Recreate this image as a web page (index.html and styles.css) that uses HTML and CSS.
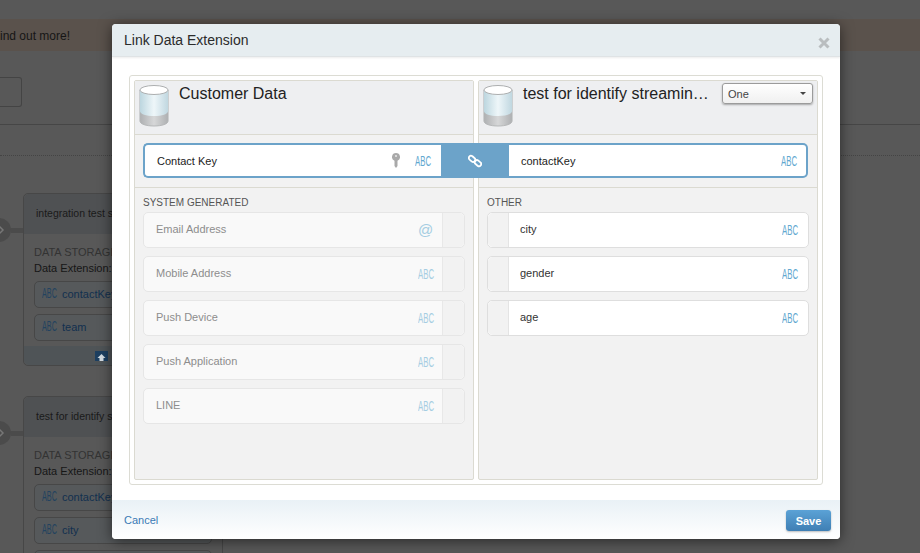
FILE: index.html
```html
<!DOCTYPE html>
<html lang="en">
<head>
<meta charset="utf-8">
<title>Link Data Extension</title>
<link rel="stylesheet" href="styles.css">
</head>
<body>
<div class="backdrop">
  <div class="banner"><span>ind out more!</span></div>
  <div class="toolbar"><div class="search"></div></div>
  <div class="dotted"></div>
  <div class="flows">
    <div class="flow">
      <div class="node"><svg width="12" height="12" viewBox="0 0 12 12"><path d="M6 2l4 4-4 4-4-4z" fill="none" stroke="#777" stroke-width="1.5"/></svg></div>
      <div class="wire"></div>
      <div class="card">
        <div class="card-head">integration test stream</div>
        <div class="card-body">
          <div class="storage">DATA STORAGE</div>
          <div class="ext">Data Extension: test</div>
          <div class="field"><span class="abc dark">ABC</span><span>contactKey</span></div>
          <div class="field"><span class="abc dark">ABC</span><span>team</span></div>
        </div>
        <div class="card-foot"><svg width="13" height="10" viewBox="0 0 13 10"><rect width="13" height="10" fill="#1d3f60"/><path d="M6.500 3l4 4H8.500v3h-4V7H2.500z" fill="#d5dde3"/></svg></div>
      </div>
    </div>
    <div class="flow second">
      <div class="node"><svg width="12" height="12" viewBox="0 0 12 12"><path d="M6 2l4 4-4 4-4-4z" fill="none" stroke="#777" stroke-width="1.5"/></svg></div>
      <div class="wire"></div>
      <div class="card">
        <div class="card-head">test for identify streaming</div>
        <div class="card-body">
          <div class="storage">DATA STORAGE</div>
          <div class="ext">Data Extension: test</div>
          <div class="field"><span class="abc dark">ABC</span><span>contactKey</span></div>
          <div class="field"><span class="abc dark">ABC</span><span>city</span></div>
          <div class="field"></div>
        </div>
      </div>
    </div>
  </div>
</div>

<div class="modal">
  <header class="modal-head">
    <h1>Link Data Extension</h1>
    <svg class="close" width="12" height="12" viewBox="0 0 12 12"><path d="M1.500 1.500l9 9M10.500 1.500l-9 9" stroke="#b9bdbf" stroke-width="3" fill="none"/></svg>
  </header>
  <div class="modal-body">
    <div class="frame">
      <section class="col">
        <div class="col-head">
          <svg class="cyl" width="30" height="42" viewBox="0 0 32 42" preserveAspectRatio="none"><defs><linearGradient id="g1" x1="0" x2="1" y1="0" y2="0"><stop offset="0" stop-color="#bcd6df"/><stop offset=".5" stop-color="#eef6f9"/><stop offset="1" stop-color="#c0d7e0"/></linearGradient><linearGradient id="g2" x1="0" x2="1" y1="0" y2="0"><stop offset="0" stop-color="#aeb0b2"/><stop offset=".5" stop-color="#d6d7d8"/><stop offset="1" stop-color="#aeb0b2"/></linearGradient></defs><path d="M1 5v31c0 3 6.500 5 15 5s15-2 15-5V5z" fill="url(#g2)" stroke="#b5b7b8"/><path d="M1 5v21c0 3 6.500 5 15 5s15-2 15-5V5z" fill="url(#g1)"/><ellipse cx="16" cy="5" rx="15" ry="4.500" fill="#fff" stroke="#a9abac"/></svg>
          <h2>Customer Data</h2>
        </div>
        <div class="link-slot">
          <div class="link-half left">
            <span class="name">Contact Key</span>
            <svg class="key" width="8" height="15" viewBox="0 0 8 15"><path d="M4 0a4 4 0 0 1 1.500 7.700V13L4 15l-1.500-2V7.700A4 4 0 0 1 4 0z" fill="#a9a9a9"/><circle cx="4" cy="3" r="1.100" fill="#e4e4e4"/></svg>
            <span class="abc">ABC</span>
          </div>
        </div>
        <div class="list">
          <div class="label">SYSTEM GENERATED</div>
          <div class="row off"><span class="name">Email Address</span><span class="at">@</span><span class="handle"></span></div>
          <div class="row off"><span class="name">Mobile Address</span><span class="abc">ABC</span><span class="handle"></span></div>
          <div class="row off"><span class="name">Push Device</span><span class="abc">ABC</span><span class="handle"></span></div>
          <div class="row off"><span class="name">Push Application</span><span class="abc">ABC</span><span class="handle"></span></div>
          <div class="row off"><span class="name">LINE</span><span class="abc">ABC</span><span class="handle"></span></div>
        </div>
      </section>
      <section class="col">
        <div class="col-head">
          <svg class="cyl" width="30" height="42" viewBox="0 0 32 42" preserveAspectRatio="none"><path d="M1 5v31c0 3 6.500 5 15 5s15-2 15-5V5z" fill="url(#g2)" stroke="#b5b7b8"/><path d="M1 5v21c0 3 6.500 5 15 5s15-2 15-5V5z" fill="url(#g1)"/><ellipse cx="16" cy="5" rx="15" ry="4.500" fill="#fff" stroke="#a9abac"/></svg>
          <h2 class="trunc">test for identify streamin…</h2>
          <div class="select"><span>One</span><i></i></div>
        </div>
        <div class="link-slot">
          <div class="link-half right">
            <span class="name">contactKey</span>
            <span class="abc">ABC</span>
          </div>
        </div>
        <div class="list">
          <div class="label">OTHER</div>
          <div class="row on"><span class="handle"></span><span class="name">city</span><span class="abc">ABC</span></div>
          <div class="row on"><span class="handle"></span><span class="name">gender</span><span class="abc">ABC</span></div>
          <div class="row on"><span class="handle"></span><span class="name">age</span><span class="abc">ABC</span></div>
        </div>
      </section>
      <div class="chain">
        <svg width="14" height="14" viewBox="0 0 14 14" fill="none" stroke="#fff" stroke-width="1.800"><rect x="0.500" y="2.600" width="7" height="4.400" rx="2.200" transform="rotate(40 4 4.800)"/><rect x="6.500" y="7" width="7" height="4.400" rx="2.200" transform="rotate(40 10 9.200)"/></svg>
      </div>
    </div>
  </div>
  <footer class="modal-foot">
    <a class="cancel">Cancel</a>
    <button class="save">Save</button>
  </footer>
</div>
</body>
</html>
```
FILE: styles.css
```css
* { box-sizing: border-box; }
html, body { margin: 0; height: 100%; }
body {
  width: 920px;
  height: 553px;
  overflow: hidden;
  position: relative;
  background: #585858;
  font-family: "Liberation Sans", Arial, sans-serif;
}

/* dimmed page behind the dialog */
.backdrop { height: 553px; overflow: hidden; padding-top: 19px; }
.banner {
  height: 32px;
  background: #5a524c;
  color: #161616;
  font-size: 12px;
  line-height: 35px;
}
.toolbar { height: 74px; padding-top: 26px; border-bottom: 1px solid #464646; }
.search {
  width: 22px;
  height: 30px;
  border: 1px solid #444;
  border-left: 0;
  border-radius: 0 3px 3px 0;
}
.dotted { height: 31px; border-bottom: 1px dotted #444; }
.flows { padding-top: 37px; }
.flow { display: flex; align-items: flex-start; margin-left: -13px; }
.flow.second { margin-top: 30px; }
.node {
  flex: none;
  width: 24px;
  height: 24px;
  margin-top: 25px;
  border-radius: 50%;
  background: #4b4b4b;
  display: flex;
  align-items: center;
  justify-content: center;
}
.wire { flex: none; width: 12px; height: 5px; margin-top: 35px; background: #4b4b4b; }
.card {
  flex: none;
  width: 200px;
  border: 1px solid #474747;
  border-radius: 5px;
  background: #585858;
}
.card-head {
  height: 40px;
  padding-left: 12px;
  line-height: 38px;
  font-size: 10.500px;
  color: #1a1a1a;
  background: #4f5153;
  border-radius: 5px 5px 0 0;
  white-space: nowrap;
}
.card-body { padding: 11px 10px 0; }
.storage { font-size: 11px; line-height: 14px; color: #333; }
.ext { padding-top: 1px; font-size: 11px; line-height: 16px; color: #161616; margin-bottom: 5px; white-space: nowrap; }
.field {
  height: 27px;
  margin-bottom: 6px;
  padding: 0 7px 2px;
  border: 1px solid #474747;
  border-radius: 5px;
  display: flex;
  align-items: center;
  gap: 4px;
  background: #56595b;
  color: #12304f;
  font-size: 11px;
}
.card-foot {
  height: 19px;
  background: #4f5457;
  border-radius: 0 0 5px 5px;
  margin-top: -1px;
  padding: 5px 0 0 71px;
  display: flex;
}
.second .card { height: 200px; }

/* dialog */
.modal {
  position: absolute;
  left: 112px;
  top: 24px;
  width: 728px;
  height: 515px;
  background: #fff;
  border-radius: 4px;
  box-shadow: 0 2px 14px rgba(0,0,0,.55);
  display: flex;
  flex-direction: column;
  overflow: hidden;
}
.modal-head {
  flex: none;
  height: 33px;
  background: #e6edf0;
  border-bottom: 1px solid #dfe3e5;
  box-shadow: 0 1px 2px rgba(0,0,0,.08);
  display: flex;
  align-items: center;
  justify-content: space-between;
  padding: 0 10px 0 12px;
}
.modal-head h1 { margin: 0; font-size: 14px; font-weight: 400; color: #2b2b2b; }
.close { margin-top: 5px; }
.modal-body { flex: 1; padding: 18px 17px 15px; }
.frame {
  position: relative;
  height: 410px;
  padding: 4px;
  border: 1px solid #dcdcd4;
  border-radius: 3px;
  display: flex;
  gap: 4px;
}
.col {
  width: 340px;
  border: 1px solid #dbdad1;
  border-radius: 2px;
  background: #f2f2f2;
  display: flex;
  flex-direction: column;
}
.col-head {
  flex: none;
  height: 54px;
  padding: 4px 4px 0 4px;
  background: #eeeff1;
  border-bottom: 1px solid #dbdad1;
  display: flex;
  align-items: flex-start;
}
.cyl { flex: none; margin-right: 10px; }
.col-head h2 {
  margin: 0;
  font-size: 16px;
  line-height: 18px;
  font-weight: 400;
  color: #222;
  white-space: nowrap;
}
.col-head .trunc { width: 199px; }
.select {
  width: 91px;
  height: 21px;
  margin-top: -2px;
  padding: 0 6px 0 5px;
  border: 1px solid #9b9b9b;
  border-radius: 3px;
  background: linear-gradient(#fff, #f0f0f0);
  box-shadow: 0 1px 2px rgba(0,0,0,.3);
  font-size: 11px;
  color: #444;
  display: flex;
  align-items: center;
  justify-content: space-between;
}
.select i {
  width: 0;
  height: 0;
  border: 3px solid transparent;
  border-top: 3px solid #444;
  border-bottom: 0;
}
.link-slot {
  flex: none;
  height: 53px;
  padding-top: 8px;
  border-bottom: 1px solid #dbdad1;
}
.link-half {
  height: 35px;
  background: #fff;
  border: 2px solid #6ca3c9;
  display: flex;
  align-items: center;
  font-size: 11px;
  color: #222;
}
.link-half.left {
  width: 298px;
  margin-left: 8px;
  border-right: 0;
  border-radius: 5px 0 0 5px;
  padding: 0 10px 0 12px;
}
.link-half.right {
  width: 299px;
  margin-left: 30px;
  border-left: 0;
  border-radius: 0 5px 5px 0;
  padding: 0 9px 0 12px;
}
.link-half .name { flex: 1; }
.key { margin-right: 15px; }
.chain {
  position: absolute;
  left: 311px;
  top: 67px;
  width: 68px;
  height: 35px;
  background: #6ca3c9;
  display: flex;
  align-items: center;
  justify-content: center;
}
.abc {
  flex: none;
  width: 16px;
  font-size: 15px;
  line-height: 15px;
  color: #5fa8d0;
  transform: scaleX(.52);
  transform-origin: 0 50%;
  white-space: nowrap;
}
.abc.dark { color: #23435f; font-size: 14px; }
.list { flex: 1; padding: 8px 8px 0; }
.label { height: 16px; font-size: 10px; line-height: 14px; color: #555; }
.list .row {
  height: 36px;
  margin-bottom: 8px;
  padding-bottom: 2px;
  border: 1px solid #e6e6e6;
  border-radius: 5px;
  display: flex;
  align-items: center;
  font-size: 11px;
}
.row .name { flex: 1; }
.row.off { background: #f9f9f9; color: #8d8d8d; padding-left: 12px; }
.row.off .abc { color: #a5cde2; margin-right: 8px; }
.row.off .handle {
  width: 22px;
  align-self: stretch;
  margin-bottom: -2px;
  background: #f2f2f2;
  border-left: 1px solid #e8e8e8;
  border-radius: 0 5px 5px 0;
}
.row.on { background: #fff; color: #333; padding-right: 10px; border-color: #dedede; }
.row.on .handle {
  width: 21px;
  align-self: stretch;
  margin: 0 11px -2px 0;
  background: #f2f2f2;
  border-right: 1px solid #e4e4e4;
  border-radius: 5px 0 0 5px;
}
.at { width: 16px; margin-right: 8px; font-size: 15px; color: #a5cde2; }
.modal-foot {
  flex: none;
  height: 39px;
  background: linear-gradient(#e9f1f6, #fff);
  display: flex;
  align-items: center;
  justify-content: space-between;
  padding: 2px 9px 0 12px;
}
.cancel { font-size: 11px; color: #3a7ab5; margin-top: -2px; }
.save {
  width: 45px;
  height: 21px;
  padding: 0;
  border: 0;
  border-radius: 3px;
  background: linear-gradient(#5ba2d6, #3f7fb4);
  box-shadow: 0 1px 2px rgba(0,0,0,.25);
  font-family: inherit;
  font-size: 11px;
  font-weight: 700;
  color: #fff;
}
```
